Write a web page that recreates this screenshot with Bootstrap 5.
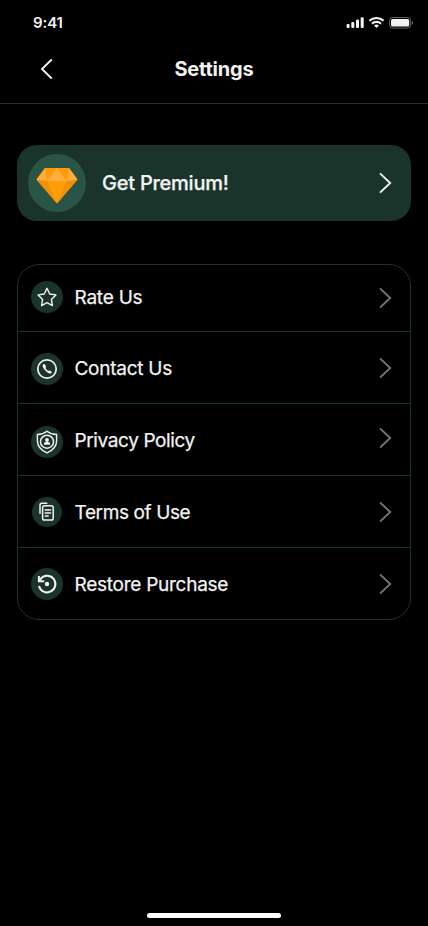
<!DOCTYPE html>
<html lang="en">
<head>
<meta charset="utf-8">
<meta name="viewport" content="width=device-width, initial-scale=1">
<title>Settings</title>
<link rel="stylesheet" href="https://cdn.jsdelivr.net/npm/bootstrap@5.3.0/dist/css/bootstrap.min.css">
<style>
body{background:#000;color:#f2f2f2;font-family:Inter,"Liberation Sans",sans-serif}
.screen{height:926px;overflow:hidden}
.status{height:46px;padding:0 15px 0 33px}
.clock{font-size:15px;font-weight:600;line-height:18px;letter-spacing:-.1px}
.topbar{height:58px;padding:0 40px 12px;border-bottom:1px solid #22332d}
.title{font-size:20px;font-weight:700;line-height:24px;letter-spacing:-.2px}
.side{width:13px}
.premium{height:76px;margin:41px 17px 0;padding:0 19px 0 11px;border-radius:20px;background:#1b342b;color:#f2f2f2}
.gem{width:58px;height:58px;background:#2a5546}
.premium-label{font-size:20px;font-weight:500;line-height:24px;letter-spacing:-.24px;margin-left:16px;-webkit-text-stroke:.25px #f2f2f2}
.menu{margin:43px 17px 0;border:1px solid #1b342b;border-radius:22px}
.menu-row{height:72px;padding:0 18px 0 13px;border:0;border-bottom:1px solid #1b342b;background:transparent;color:#f2f2f2}
.menu-row:first-child{height:67px}
.menu-row:last-child{border-bottom:0;height:71px}
.menu-label{font-size:19px;font-weight:400;line-height:24px;letter-spacing:-.26px;margin:2px 0 0 11.5px;-webkit-text-stroke:.25px #f2f2f2}
.menu-row:first-child .menu-label{margin-top:0;margin-bottom:1px;letter-spacing:-.22px}
.label-tight{letter-spacing:-.38px}
.disc{width:32px;height:32px;background:#1b342b}
.disc-sm{width:30px;height:30px;margin:0 1px}
.nudge-down{margin-top:2px}
.nudge-down-more{margin-top:4px}
.nudge-up{margin-bottom:3px}
.nudge-up-sm{margin-bottom:2px}
.arrow{color:#757575}
.home-bar{width:134px;height:5px;margin-bottom:8px}
svg{display:block;flex:none}
</style>
</head>
<body>
<svg width="0" height="0" class="d-none"><defs>
<symbol id="chev" viewBox="0 0 13 22"><path d="M1 1.4 11.2 11 1 20.6" fill="none" stroke="currentColor" stroke-width="1.9"/></symbol>
</defs></svg>
<main class="screen d-flex flex-column">
  <div class="status d-flex align-items-center justify-content-between">
    <span class="clock">9:41</span>
    <svg width="67" height="14" viewBox="0 0 67 14" fill="#f2f2f2">
      <rect x="0.6" y="8" width="3" height="4" rx="1"/><rect x="5.3" y="6" width="3" height="6" rx="1"/><rect x="10" y="3.6" width="3" height="8.4" rx="1"/><rect x="14.7" y="1.2" width="3" height="10.8" rx="1"/>
      <path d="M23.4 4.8a10.4 10.4 0 0 1 14.2 0M26 7.6a6.7 6.7 0 0 1 9 0" fill="none" stroke="#f2f2f2" stroke-width="2.1"/>
      <path d="M28.1 9.6a3.7 3.7 0 0 1 4.8 0L30.5 12z"/>
      <rect x="43.6" y="1.5" width="21" height="10.6" rx="3" fill="none" stroke="#666"/>
      <rect x="45" y="3" width="18.2" height="7.6" rx="1.6"/><path d="M65.7 5v3.8c1.7-.7 1.7-3.1 0-3.8z" fill="#666"/>
    </svg>
  </div>
  <header class="topbar d-flex align-items-center justify-content-between">
    <a href="#" class="side text-reset" aria-label="Back"><svg width="13" height="22" viewBox="0 0 13 22"><path d="M11.7 1.5 2 11l9.7 9.5" fill="none" stroke="currentColor" stroke-width="1.9"/></svg></a>
    <h1 class="title mb-0">Settings</h1>
    <span class="side"></span>
  </header>
  <a href="#" class="premium d-flex align-items-center text-decoration-none">
    <span class="gem rounded-circle d-flex align-items-center justify-content-center">
      <svg width="58" height="58" viewBox="0 0 58 58">
        <path d="M17 14h24l8.5 11.5L29 49.5 8.5 25.5z" fill="#ff9d0a"/>
        <path d="M8.5 25.5 19 27l10 22.5zM49.5 25.5 39 27 29 49.5z" fill="#f39106"/>
        <path d="M17 14h12L19 27zM41 14H29l10 13z" fill="#ff9a08"/>
        <path d="M17 14 8.5 25.5 19 27zM41 14l8.5 11.5L39 27zM29 14 19 27h20z" fill="#ffad3c"/>
      </svg>
    </span>
    <span class="premium-label flex-grow-1">Get Premium!</span>
    <svg width="13" height="22"><use href="#chev"/></svg>
  </a>
  <nav class="menu list-group">
    <a href="#" class="menu-row list-group-item d-flex align-items-center">
      <span class="disc nudge-up-sm rounded-circle">
        <svg width="32" height="32" viewBox="0 0 32 32"><path d="m16 7.3 2.7 5.7 6.2.9-4.5 4.5 1 6.2-5.4-2.9-5.4 2.9 1-6.2-4.5-4.5 6.2-.9z" fill="none" stroke="#f2f2f2" stroke-width="1.4" stroke-linejoin="round"/></svg>
      </span>
      <span class="menu-label flex-grow-1">Rate Us</span>
      <svg width="13" height="22" class="arrow"><use href="#chev"/></svg>
    </a>
    <a href="#" class="menu-row list-group-item d-flex align-items-center">
      <span class="disc nudge-down rounded-circle">
        <svg width="32" height="32" viewBox="0 0 32 32"><circle cx="16" cy="16" r="9.2" fill="none" stroke="#f2f2f2" stroke-width="1.7"/><path d="M12.2 11.3c-1 1-.6 2.9 1.4 5.4 2.1 2.6 4.5 4.1 6.1 3.7.9-.3 1.3-1 1.1-1.4l-1.9-1.4c-.5-.3-.9 0-1.3.5-1.4-.5-2.6-1.9-3.2-3.3.6-.3.8-.7.6-1.2l-1-2c-.4-.6-1.2-.8-1.8-.3z" fill="#f2f2f2"/></svg>
      </span>
      <span class="menu-label flex-grow-1">Contact Us</span>
      <svg width="13" height="22" class="arrow"><use href="#chev"/></svg>
    </a>
    <a href="#" class="menu-row list-group-item d-flex align-items-center">
      <span class="disc nudge-down-more rounded-circle">
        <svg width="32" height="32" viewBox="0 0 32 32"><path d="M16 5.2c2.7 2.1 6 3.2 9.6 3.3v6.2c0 5.6-3.8 9.6-9.6 12.2-5.8-2.6-9.6-6.6-9.6-12.2V8.5c3.6-.1 6.9-1.2 9.6-3.3z" fill="none" stroke="#f2f2f2" stroke-width="1.4"/><circle cx="16" cy="15.7" r="6.5" fill="none" stroke="#f2f2f2" stroke-width="1.5"/><circle cx="16" cy="14" r="1.9" fill="#f2f2f2"/><path d="M12.9 18.7v-.9c0-1.3 1.3-2 3.1-2s3.1.7 3.1 2v.9z" fill="#f2f2f2"/></svg>
      </span>
      <span class="menu-label label-tight flex-grow-1">Privacy Policy</span>
      <svg width="13" height="22" class="arrow nudge-up"><use href="#chev"/></svg>
    </a>
    <a href="#" class="menu-row list-group-item d-flex align-items-center">
      <span class="disc disc-sm rounded-circle">
        <svg width="30" height="30" viewBox="0 0 30 30" fill="none" stroke="#f2f2f2" stroke-width="1.5" stroke-linecap="round" stroke-linejoin="round"><rect x="10.6" y="8.8" width="10.6" height="14.3" rx="1.8"/><path d="M8 16.3V8.2C8 7 8.7 6.3 9.9 6.3h4.9M13.2 13h5.4M13.2 16h5.4M13.2 19h3"/></svg>
      </span>
      <span class="menu-label label-tight flex-grow-1">Terms of Use</span>
      <svg width="13" height="22" class="arrow"><use href="#chev"/></svg>
    </a>
    <a href="#" class="menu-row list-group-item d-flex align-items-center">
      <span class="disc rounded-circle">
        <svg width="32" height="32" viewBox="0 0 32 32" fill="none" stroke="#f2f2f2" stroke-width="2"><path d="M8 18a8.300 8.300 0 1 0 1.400-6.900l-1 1.600"/><path d="M7.900 8v5.200h5.300"/><circle cx="16" cy="16" r="2.200" fill="#f2f2f2" stroke="none"/></svg>
      </span>
      <span class="menu-label flex-grow-1">Restore Purchase</span>
      <svg width="13" height="22" class="arrow"><use href="#chev"/></svg>
    </a>
  </nav>
  <div class="home-bar bg-white rounded-pill mt-auto mx-auto"></div>
</main>
<script src="https://cdn.jsdelivr.net/npm/bootstrap@5.3.0/dist/js/bootstrap.bundle.min.js"></script>
</body>
</html>
